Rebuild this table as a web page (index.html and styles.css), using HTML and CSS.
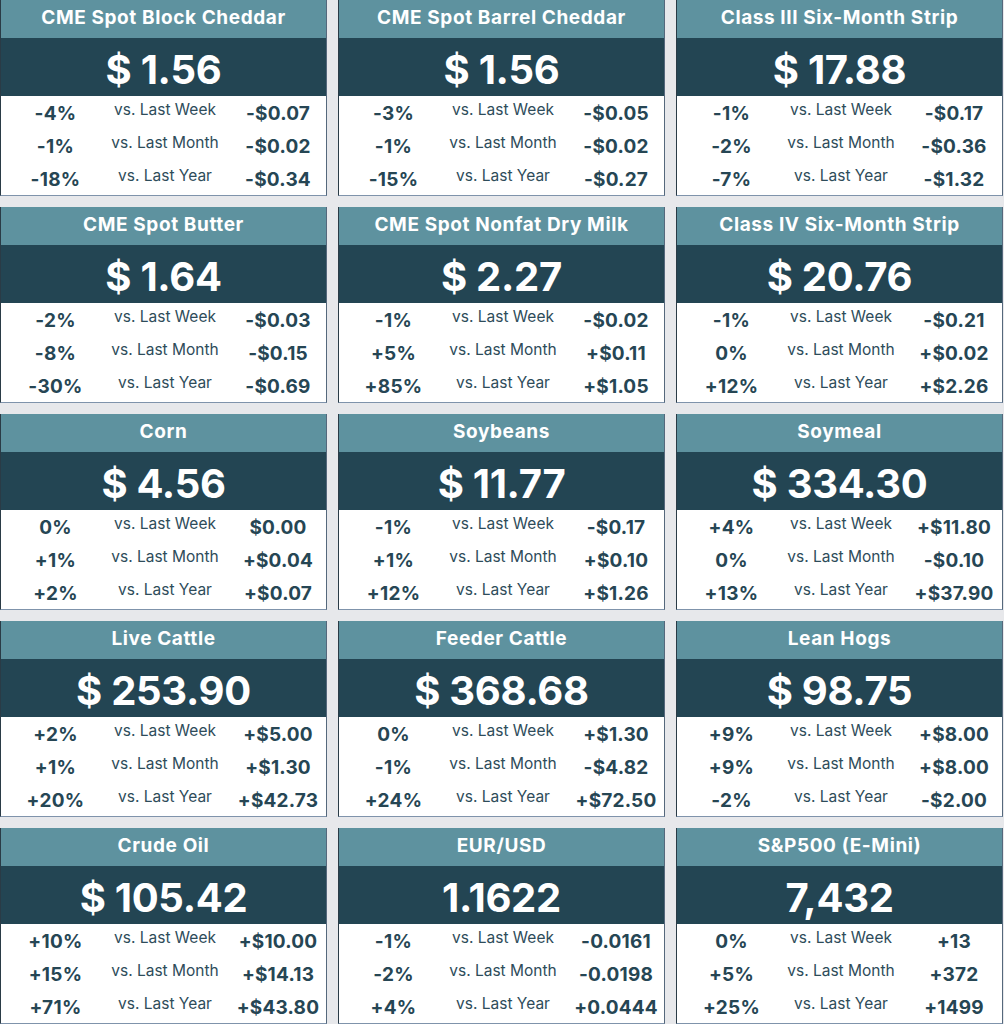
FILE: index.html
```html
<!DOCTYPE html>
<html lang="en">
<head>
<meta charset="utf-8">
<title>Market Dashboard</title>
<link rel="stylesheet" href="styles.css">
</head>
<body>
<div class="grid">
  <div class="card">
    <div class="title">CME Spot Block Cheddar</div>
    <div class="price">$ 1.56</div>
    <div class="rows">
      <div class="row"><span class="pct">-4%</span><span class="lbl">vs. Last Week</span><span class="val">-$0.07</span></div>
      <div class="row"><span class="pct">-1%</span><span class="lbl">vs. Last Month</span><span class="val">-$0.02</span></div>
      <div class="row"><span class="pct">-18%</span><span class="lbl">vs. Last Year</span><span class="val">-$0.34</span></div>
    </div>
  </div>
  <div class="card">
    <div class="title">CME Spot Barrel Cheddar</div>
    <div class="price">$ 1.56</div>
    <div class="rows">
      <div class="row"><span class="pct">-3%</span><span class="lbl">vs. Last Week</span><span class="val">-$0.05</span></div>
      <div class="row"><span class="pct">-1%</span><span class="lbl">vs. Last Month</span><span class="val">-$0.02</span></div>
      <div class="row"><span class="pct">-15%</span><span class="lbl">vs. Last Year</span><span class="val">-$0.27</span></div>
    </div>
  </div>
  <div class="card">
    <div class="title">Class III Six-Month Strip</div>
    <div class="price">$ 17.88</div>
    <div class="rows">
      <div class="row"><span class="pct">-1%</span><span class="lbl">vs. Last Week</span><span class="val">-$0.17</span></div>
      <div class="row"><span class="pct">-2%</span><span class="lbl">vs. Last Month</span><span class="val">-$0.36</span></div>
      <div class="row"><span class="pct">-7%</span><span class="lbl">vs. Last Year</span><span class="val">-$1.32</span></div>
    </div>
  </div>

  <div class="card">
    <div class="title">CME Spot Butter</div>
    <div class="price">$ 1.64</div>
    <div class="rows">
      <div class="row"><span class="pct">-2%</span><span class="lbl">vs. Last Week</span><span class="val">-$0.03</span></div>
      <div class="row"><span class="pct">-8%</span><span class="lbl">vs. Last Month</span><span class="val">-$0.15</span></div>
      <div class="row"><span class="pct">-30%</span><span class="lbl">vs. Last Year</span><span class="val">-$0.69</span></div>
    </div>
  </div>
  <div class="card">
    <div class="title">CME Spot Nonfat Dry Milk</div>
    <div class="price">$ 2.27</div>
    <div class="rows">
      <div class="row"><span class="pct">-1%</span><span class="lbl">vs. Last Week</span><span class="val">-$0.02</span></div>
      <div class="row"><span class="pct">+5%</span><span class="lbl">vs. Last Month</span><span class="val">+$0.11</span></div>
      <div class="row"><span class="pct">+85%</span><span class="lbl">vs. Last Year</span><span class="val">+$1.05</span></div>
    </div>
  </div>
  <div class="card">
    <div class="title">Class IV Six-Month Strip</div>
    <div class="price">$ 20.76</div>
    <div class="rows">
      <div class="row"><span class="pct">-1%</span><span class="lbl">vs. Last Week</span><span class="val">-$0.21</span></div>
      <div class="row"><span class="pct">0%</span><span class="lbl">vs. Last Month</span><span class="val">+$0.02</span></div>
      <div class="row"><span class="pct">+12%</span><span class="lbl">vs. Last Year</span><span class="val">+$2.26</span></div>
    </div>
  </div>

  <div class="card">
    <div class="title">Corn</div>
    <div class="price">$ 4.56</div>
    <div class="rows">
      <div class="row"><span class="pct">0%</span><span class="lbl">vs. Last Week</span><span class="val">$0.00</span></div>
      <div class="row"><span class="pct">+1%</span><span class="lbl">vs. Last Month</span><span class="val">+$0.04</span></div>
      <div class="row"><span class="pct">+2%</span><span class="lbl">vs. Last Year</span><span class="val">+$0.07</span></div>
    </div>
  </div>
  <div class="card">
    <div class="title">Soybeans</div>
    <div class="price">$ 11.77</div>
    <div class="rows">
      <div class="row"><span class="pct">-1%</span><span class="lbl">vs. Last Week</span><span class="val">-$0.17</span></div>
      <div class="row"><span class="pct">+1%</span><span class="lbl">vs. Last Month</span><span class="val">+$0.10</span></div>
      <div class="row"><span class="pct">+12%</span><span class="lbl">vs. Last Year</span><span class="val">+$1.26</span></div>
    </div>
  </div>
  <div class="card">
    <div class="title">Soymeal</div>
    <div class="price">$ 334.30</div>
    <div class="rows">
      <div class="row"><span class="pct">+4%</span><span class="lbl">vs. Last Week</span><span class="val">+$11.80</span></div>
      <div class="row"><span class="pct">0%</span><span class="lbl">vs. Last Month</span><span class="val">-$0.10</span></div>
      <div class="row"><span class="pct">+13%</span><span class="lbl">vs. Last Year</span><span class="val">+$37.90</span></div>
    </div>
  </div>

  <div class="card">
    <div class="title">Live Cattle</div>
    <div class="price">$ 253.90</div>
    <div class="rows">
      <div class="row"><span class="pct">+2%</span><span class="lbl">vs. Last Week</span><span class="val">+$5.00</span></div>
      <div class="row"><span class="pct">+1%</span><span class="lbl">vs. Last Month</span><span class="val">+$1.30</span></div>
      <div class="row"><span class="pct">+20%</span><span class="lbl">vs. Last Year</span><span class="val">+$42.73</span></div>
    </div>
  </div>
  <div class="card">
    <div class="title">Feeder Cattle</div>
    <div class="price">$ 368.68</div>
    <div class="rows">
      <div class="row"><span class="pct">0%</span><span class="lbl">vs. Last Week</span><span class="val">+$1.30</span></div>
      <div class="row"><span class="pct">-1%</span><span class="lbl">vs. Last Month</span><span class="val">-$4.82</span></div>
      <div class="row"><span class="pct">+24%</span><span class="lbl">vs. Last Year</span><span class="val">+$72.50</span></div>
    </div>
  </div>
  <div class="card">
    <div class="title">Lean Hogs</div>
    <div class="price">$ 98.75</div>
    <div class="rows">
      <div class="row"><span class="pct">+9%</span><span class="lbl">vs. Last Week</span><span class="val">+$8.00</span></div>
      <div class="row"><span class="pct">+9%</span><span class="lbl">vs. Last Month</span><span class="val">+$8.00</span></div>
      <div class="row"><span class="pct">-2%</span><span class="lbl">vs. Last Year</span><span class="val">-$2.00</span></div>
    </div>
  </div>

  <div class="card">
    <div class="title">Crude Oil</div>
    <div class="price">$ 105.42</div>
    <div class="rows">
      <div class="row"><span class="pct">+10%</span><span class="lbl">vs. Last Week</span><span class="val">+$10.00</span></div>
      <div class="row"><span class="pct">+15%</span><span class="lbl">vs. Last Month</span><span class="val">+$14.13</span></div>
      <div class="row"><span class="pct">+71%</span><span class="lbl">vs. Last Year</span><span class="val">+$43.80</span></div>
    </div>
  </div>
  <div class="card">
    <div class="title">EUR/USD</div>
    <div class="price">1.1622</div>
    <div class="rows">
      <div class="row"><span class="pct">-1%</span><span class="lbl">vs. Last Week</span><span class="val">-0.0161</span></div>
      <div class="row"><span class="pct">-2%</span><span class="lbl">vs. Last Month</span><span class="val">-0.0198</span></div>
      <div class="row"><span class="pct">+4%</span><span class="lbl">vs. Last Year</span><span class="val">+0.0444</span></div>
    </div>
  </div>
  <div class="card">
    <div class="title">S&amp;P500 (E-Mini)</div>
    <div class="price">7,432</div>
    <div class="rows">
      <div class="row"><span class="pct">0%</span><span class="lbl">vs. Last Week</span><span class="val">+13</span></div>
      <div class="row"><span class="pct">+5%</span><span class="lbl">vs. Last Month</span><span class="val">+372</span></div>
      <div class="row"><span class="pct">+25%</span><span class="lbl">vs. Last Year</span><span class="val">+1499</span></div>
    </div>
  </div>
</div>
</body>
</html>
```
FILE: styles.css
```css
html, body {
  margin: 0;
  padding: 0;
}
body {
  background: #e7e8eb;
  font-family: "Inter", "Lato", "Liberation Sans", sans-serif;
  color: #264654;
}
.grid {
  display: grid;
  grid-template-columns: 327px 327px 327px;
  grid-template-rows: repeat(5, 196px);
  column-gap: 11px;
  row-gap: 11px;
  width: 1004px;
  height: 1024px;
}
.card {
  display: flex;
  flex-direction: column;
  background: #ffffff;
  border-left: 1px solid #2a3b46;
  border-right: 1px solid #55687c;
  border-bottom: 1px solid #7f93ab;
  box-sizing: border-box;
}
.title {
  height: 38px;
  background: #5e929f;
  color: #ffffff;
  font-weight: 700;
  font-size: 19px;
  line-height: 35px;
  text-align: center;
  letter-spacing: 0.6px;
}
.price {
  height: 58px;
  background: #234553;
  color: #ffffff;
  font-weight: 700;
  font-size: 40px;
  line-height: 64px;
  text-align: center;
  letter-spacing: -0.3px;
}
.rows {
  flex: 1;
  display: flex;
  flex-direction: column;
}
.row {
  height: 33px;
  display: grid;
  grid-template-columns: 109px 110px 1fr;
  align-items: center;
}
.pct, .val {
  font-weight: 700;
  font-size: 19px;
  text-align: center;
  padding-top: 2px;
}
.pct {
  letter-spacing: 0.3px;
}
.val {
  padding-left: 10px;
  letter-spacing: 0.2px;
}
.lbl {
  font-size: 15.5px;
  text-align: center;
  padding-bottom: 6px;
  color: #2e4c5a;
}
```
